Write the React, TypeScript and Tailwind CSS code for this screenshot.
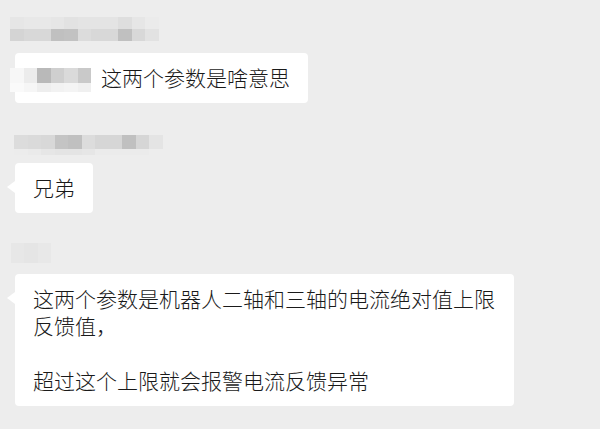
import React from 'react'

// mosaic cells used to hide names, row by row
const name1 = [
  ['bg-[#e6e6e6]', 'bg-[#e8e8e8]', 'bg-[#e8e8e8]', 'bg-[#e6e6e6]', 'bg-[#e2e2e2]', 'bg-[#e4e4e4]', 'bg-[#e4e4e4]', 'bg-[#e4e4e4]', 'bg-[#dedede]', 'bg-[#e6e6e6]', 'bg-[#ebebeb]'],
  ['bg-[#d4d4d4]', 'bg-[#d8d8d8]', 'bg-[#d8d8d8]', 'bg-[#c0c0c0]', 'bg-[#c2c2c2]', 'bg-[#dcdcdc]', 'bg-[#d8d8d8]', 'bg-[#d8d8d8]', 'bg-[#c0c0c0]', 'bg-[#d8d8d8]', 'bg-[#e2e2e2]'],
]
const name2 = [
  ['bg-[#dcdcdc]', 'bg-[#dadada]', 'bg-[#d8d8d8]', 'bg-[#c4c4c4]', 'bg-[#c0c0c0]', 'bg-[#dcdcdc]', 'bg-[#d6d6d6]', 'bg-[#d6d6d6]', 'bg-[#c0c0c0]', 'bg-[#d6d6d6]', 'bg-[#e4e4e4]'],
  ['bg-[#ececec]', 'bg-[#eaeaea]', 'bg-[#e6e6e6]', 'bg-[#e4e4e4]', 'bg-[#e4e4e4]', 'bg-[#e6e6e6]', 'bg-[#ebebeb]', 'bg-[#ebebeb]', 'bg-[#ebebeb]', 'bg-[#ebebeb]', 'bg-[#ededed]'],
]
const at1 = [
  ['bg-[#f7f7f7]', 'bg-[#ececec]', 'bg-[#b9b9b9]', 'bg-[#cfcfcf]', 'bg-[#dadada]', 'bg-[#c9c9c9]'],
  ['bg-[#fafafa]', 'bg-[#f6f6f6]', 'bg-[#eeeeee]', 'bg-[#f2f2f2]', 'bg-[#f4f4f4]', 'bg-[#f0f0f0]'],
]

const Mosaic = ({ rows, heights, className = '' }: { rows: string[][]; heights: string[]; className?: string }) => (
  <div className={`flex flex-col ${className}`}>
    {rows.map((row, i) => (
      <div key={i} className={`flex ${heights[i]}`}>
        {row.map((c, j) => (
          <div key={j} className={`w-[13.5px] ${c}`} />
        ))}
      </div>
    ))}
  </div>
)

const Bubble = ({ children, tail = true, className = '' }: { children: React.ReactNode; tail?: boolean; className?: string }) => (
  <div className={`relative rounded-[4px] bg-white px-[18px] py-[11px] text-[21px] font-light leading-[27.5px] text-[#1a1a1a] ${className}`}>
    {tail && (
      <span className="absolute left-[-8px] top-[18px] h-0 w-0 border-y-[6.5px] border-r-[8px] border-y-transparent border-r-white" />
    )}
    {children}
  </div>
)

export default function App() {
  return (
    <div className="flex min-h-screen w-full flex-col items-start bg-[#ededed] pl-[15px] pt-[17px] font-['Noto_Sans_CJK_SC','Microsoft_YaHei',sans-serif]">
      {/* message 1 */}
      <Mosaic rows={name1} heights={['h-[12px]', 'h-[12px]']} className="ml-[-5px]" />
      <Bubble tail={false} className="mt-[12px] flex items-start">
        <Mosaic rows={at1} heights={['h-[15px]', 'h-[9px]']} className="ml-[-23px] mr-[10px] mt-[4px]" />
        <span>这两个参数是啥意思</span>
      </Bubble>

      {/* message 2 */}
      <Mosaic rows={name2} heights={['h-[14px]', 'h-[6px]']} className="ml-[-1px] mt-[32px]" />
      <Bubble className="mt-[8px]">兄弟</Bubble>

      {/* message 3 */}
      <div className="ml-[-4px] mt-[30px] flex h-[20px] w-[40px]">
        <div className="w-[13px] bg-[#e7e7e7]" />
        <div className="w-[14px] bg-[#e5e5e5]" />
        <div className="w-[13px] bg-[#e8e8e8]" />
      </div>
      <Bubble className="mt-[11px] max-w-[499px] whitespace-pre-wrap">
        {'这两个参数是机器人二轴和三轴的电流绝对值上限反馈值，\n\n超过这个上限就会报警电流反馈异常'}
      </Bubble>
    </div>
  )
}
